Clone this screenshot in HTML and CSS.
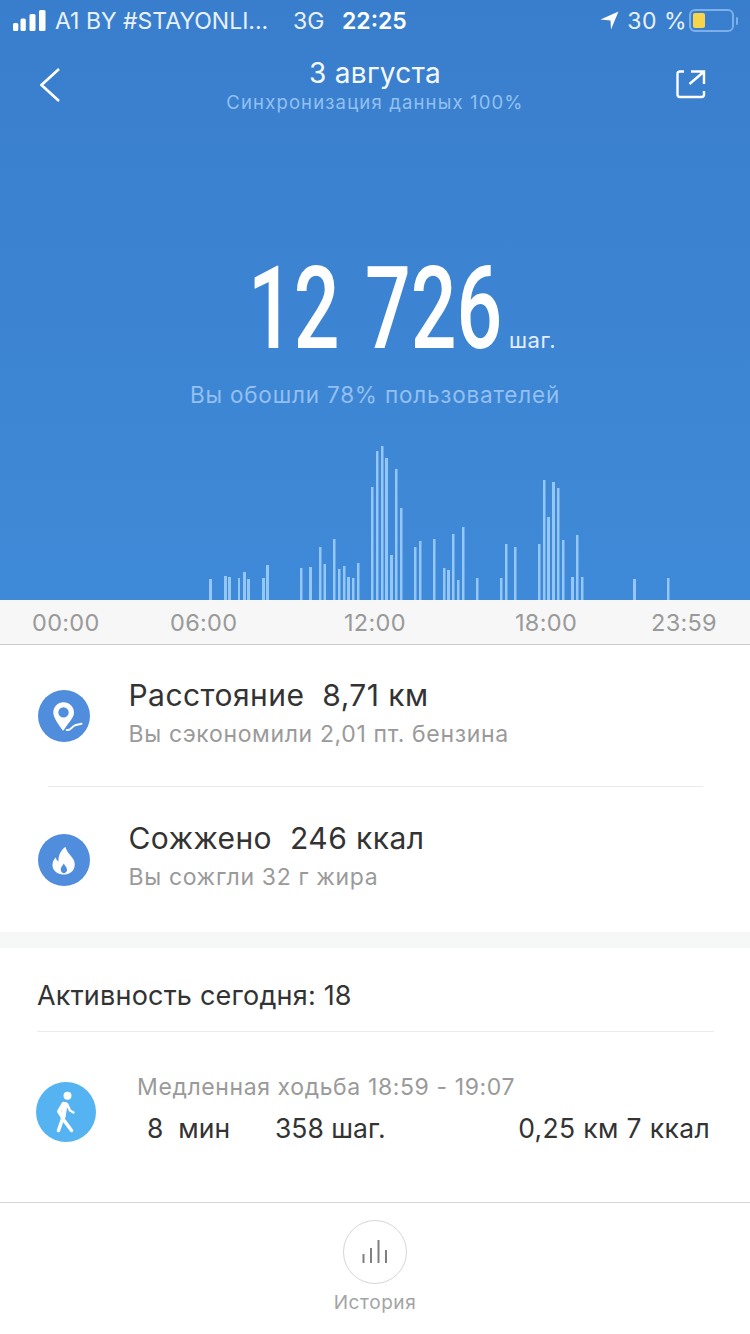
FILE: index.html
```html
<!DOCTYPE html>
<html lang="ru">
<head>
<meta charset="utf-8">
<title>Шаги</title>
<link rel="stylesheet" href="styles.css">
</head>
<body>
<div class="screen">
  <section class="hero">
    <div class="status">
      <svg class="signal" width="34" height="21" viewBox="0 0 34 21"><rect x="0" y="13" width="5.300" height="8" rx="1.5"/><rect x="7.500" y="8.500" width="5.300" height="12.500" rx="1.5"/><rect x="16.500" y="4" width="6" height="17" rx="1.5"/><rect x="26" y="0" width="6.500" height="21" rx="1.5"/></svg>
      <span class="carrier">A1 BY #STAYONLI...</span>
      <span class="net">3G</span>
      <span class="clock">22:25</span>
      <span class="status-right">
        <svg width="19" height="19" viewBox="0 0 19 19"><path class="fill-white" d="M18.500 .5 L.5 8.500 L10.500 9.500 L11 18.500 Z"/></svg>
        <span class="battery-pct">30 %</span>
        <span class="battery"><span class="battery-level"></span></span>
        <span class="battery-tip"></span>
      </span>
    </div>
    <div class="navbar">
      <svg class="back" width="22" height="36" viewBox="0 0 22 36"><path d="M19 1 L1.500 17 L19 33"/></svg>
      <div class="title">
        <div class="title-main">3 августа</div>
        <div class="title-sub">Синхронизация данных 100%</div>
      </div>
      <svg class="share" width="30" height="30" viewBox="0 0 30 30"><path d="M8 1.500 H4 Q1.500 1.500 1.500 4 V24.500 Q1.500 27 4 27 H25.500 Q28 27 28 24.500 V21 M13.500 14 L27.500 2 M15 1.500 H28 V14"/></svg>
    </div>
    <div class="steps">
      <span class="steps-num"><span class="steps-digits">12 726</span></span>
      <span class="steps-unit">шаг.</span>
    </div>
    <div class="rank">Вы обошли 78% пользователей</div>
    <svg class="chart" width="750" height="160" viewBox="0 440 750 160">
      <rect x="209" y="579" width="3" height="21"/><rect x="224" y="576" width="3" height="24"/><rect x="228" y="577" width="3" height="23"/><rect x="238" y="578" width="2" height="22"/><rect x="243" y="572" width="3" height="28"/><rect x="247" y="579" width="3" height="21"/><rect x="262" y="578" width="3" height="22"/><rect x="266" y="565" width="3" height="35"/><rect x="300" y="568" width="2.5" height="32"/><rect x="309" y="567" width="3" height="33"/><rect x="319" y="547" width="2.5" height="53"/><rect x="323.500" y="564" width="2.500" height="36"/><rect x="333" y="539" width="2.500" height="61"/><rect x="338" y="569" width="2.500" height="31"/><rect x="343" y="566" width="2.500" height="34"/><rect x="347" y="577" width="3" height="23"/><rect x="352" y="578" width="2.500" height="22"/><rect x="357" y="563" width="2.500" height="37"/><rect x="371" y="487" width="2.500" height="113"/><rect x="376" y="451" width="2.500" height="149"/><rect x="381" y="446" width="2.500" height="154"/><rect x="385" y="458" width="3" height="142"/><rect x="390" y="555" width="3" height="45"/><rect x="395" y="469" width="2.500" height="131"/><rect x="400" y="508" width="2.500" height="92"/><rect x="414" y="547" width="2.500" height="53"/><rect x="419" y="541" width="2.500" height="59"/><rect x="433" y="539" width="2.500" height="61"/><rect x="443" y="568" width="2.500" height="32"/><rect x="447" y="570" width="3" height="30"/><rect x="452" y="534" width="2.500" height="66"/><rect x="457" y="580" width="2.500" height="20"/><rect x="462" y="527" width="2.500" height="73"/><rect x="476" y="578" width="2.500" height="22"/><rect x="500" y="578" width="2.500" height="22"/><rect x="505" y="544" width="2.500" height="56"/><rect x="514" y="547" width="2.500" height="53"/><rect x="538" y="544" width="2.500" height="56"/><rect x="543" y="480" width="2.500" height="120"/><rect x="547" y="517" width="3" height="83"/><rect x="552" y="482" width="3" height="118"/><rect x="557" y="488" width="2.500" height="112"/><rect x="562" y="540" width="2.500" height="60"/><rect x="571" y="577" width="3" height="23"/><rect x="576" y="535" width="2.500" height="65"/><rect x="581" y="577" width="2.500" height="23"/><rect x="633" y="579" width="3" height="21"/><rect x="667" y="578" width="2.500" height="22"/>
    </svg>
  </section>
  <div class="axis">
    <span>00:00</span><span>06:00</span><span>12:00</span><span>18:00</span><span>23:59</span>
  </div>
  <section class="stats">
    <div class="stat">
      <span class="stat-icon">
        <svg width="52" height="52" viewBox="0 0 52 52"><path class="fill-white" fill-rule="evenodd" d="M25.500 12.300 C19.800 12.300 15.300 16.800 15.300 22.500 C15.300 27.800 20.800 35 25 40.800 C26.200 39.500 27.800 37 29.200 35 C32.800 30.500 36 26.500 36 22.500 C36 16.800 31.300 12.300 25.500 12.300 Z M25.500 17.200 A5.200 5.200 0 1 1 25.500 27.600 A5.200 5.200 0 1 1 25.500 17.200 Z"/><path class="stroke-white thin" d="M28.800 40 C32.500 41 33.500 36.800 37 35.300 L43.500 33.800"/></svg>
      </span>
      <div class="stat-text">
        <div class="stat-main"><span class="stat-label">Расстояние</span><span>8,71 км</span></div>
        <div class="stat-sub">Вы сэкономили 2,01 пт. бензина</div>
      </div>
    </div>
    <div class="stat-divider"></div>
    <div class="stat stat-second">
      <span class="stat-icon">
        <svg width="52" height="52" viewBox="0 0 52 52"><path class="fill-white" fill-rule="evenodd" d="M27.500 12.700 C28.500 18 33 21 35.500 25.500 C38.800 32 35.500 40 27 40.400 L24.500 40.400 C17.500 40 13.200 34.500 14.800 28.500 C15.300 26.500 16.500 24.800 17.800 23.500 C18.200 25.500 19 26.800 20.500 27.500 C20 21 23.500 15.500 27.500 12.700 Z M25.800 29.500 C24.300 31.800 22.500 33.500 22.800 36 C23 38 24.500 39.300 26 39.200 C27.800 39 29.300 37.500 29 35.500 C28.700 33 27 32 25.800 29.500 Z"/></svg>
      </span>
      <div class="stat-text">
        <div class="stat-main"><span class="stat-label">Сожжено</span><span>246 ккал</span></div>
        <div class="stat-sub">Вы сожгли 32 г жира</div>
      </div>
    </div>
  </section>
  <div class="band"></div>
  <section class="activity">
    <h2 class="activity-head">Активность сегодня: 18</h2>
    <div class="activity-item">
      <span class="walk-icon">
        <svg width="60" height="60" viewBox="0 0 60 60"><circle class="fill-white" cx="31.500" cy="13.700" r="4"/><path class="stroke-white walk-torso" d="M29 22.500 L27 35"/><path class="stroke-white walk-limb" d="M27.500 21.500 L22.800 29.500 L25 33 M26.300 36 L35.500 48.500 M26.500 37 L22.500 48.500"/><path class="stroke-white walk-arm" d="M31 22 L34 28.500 L37.500 30.500"/></svg>
      </span>
      <div class="activity-info">
        <div class="activity-time">Медленная ходьба 18:59 - 19:07</div>
        <div class="activity-values">
          <span class="val-min">8&nbsp; мин</span>
          <span class="val-steps">358 шаг.</span>
          <span class="val-rest">0,25 км 7 ккал</span>
        </div>
      </div>
    </div>
  </section>
  <nav class="tabbar">
    <span class="history-btn">
      <svg width="30" height="26" viewBox="0 0 30 26"><path d="M3.500 15 V24 M11 9 V24 M18.500 1 V24 M26 11 V24"/></svg>
    </span>
    <span class="history-label">История</span>
  </nav>
</div>
</body>
</html>
```
FILE: styles.css
```css
* { box-sizing: border-box; }
html, body { margin: 0; padding: 0; background: #fff; }
body { font-family: Inter, Roboto, "Liberation Sans", sans-serif; }
.screen { width: 750px; height: 1334px; overflow: hidden; display: flex; flex-direction: column; }

.fill-white { fill: #fff; }
.stroke-white { fill: none; stroke: #fff; stroke-width: 2.5; stroke-linecap: round; }
.thin { stroke-width: 2; }

/* Blue summary panel */
.hero {
  height: 600px;
  background: linear-gradient(180deg, #397ecd 0%, #3f8ad8 100%);
  color: #fff;
  display: flex;
  flex-direction: column;
}
.status { height: 41px; display: flex; align-items: center; padding: 0 0 0 13px; font-size: 23px; color: #e9f1fb; }
.signal { fill: #fff; margin-right: 8px; }
.carrier { width: 238px; white-space: nowrap; }
.net { width: 49px; }
.clock { font-weight: 600; color: #fff; }
.status-right { margin-left: auto; display: flex; align-items: center; padding-right: 12px; }
.battery-pct { margin: 0 2px 0 8px; letter-spacing: .5px; }
.battery { width: 45px; height: 23px; border: 2px solid #7db0e8; border-radius: 6px; padding: 2px; display: block; }
.battery-level { display: block; width: 12px; height: 100%; background: #f7d54a; border-radius: 2px; }
.battery-tip { width: 2px; height: 8px; margin-left: 2px; background: #7db0e8; border-radius: 1px; }

.navbar { height: 80px; display: flex; justify-content: space-between; align-items: flex-start; padding: 27px 44px 0 40px; }
.back { fill: none; stroke: #fff; stroke-width: 2.6; }
.share { fill: none; stroke: #fff; stroke-width: 2.4; margin: 1.500px 0 0; }
.title { text-align: center; margin-top: -13px; margin-left: 12px; }
.title-main { font-size: 28px; line-height: 36px; letter-spacing: .3px; color: #f4f8fd; }
.title-sub { font-size: 18.500px; line-height: 22px; letter-spacing: 1.150px; color: #93c0f0; }

.steps { height: 125px; margin-top: 125px; padding-left: 248px; display: flex; align-items: flex-end; }
.steps-num { display: inline-block; width: 252px; font-family: Roboto, sans-serif; font-weight: 500; font-size: 115px; line-height: 125px; }
.steps-digits { display: inline-block; transform: scaleX(.7); transform-origin: 0 50%; white-space: nowrap; word-spacing: 8px; }
.steps-unit { font-size: 22px; line-height: 28px; letter-spacing: .5px; margin: 0 0 17px 9px; color: #e3eefa; }
.rank { margin-top: 9px; text-align: center; font-size: 22.500px; line-height: 30px; letter-spacing: .8px; color: #93c0f0; }
.chart { display: block; margin-top: auto; fill: #94c6f6; }

/* Time axis */
.axis { height: 45px; background: #f7f7f7; border-bottom: 1px solid #cdcdcd; display: grid; grid-template-columns: 138px 174px 171px 136px auto; padding: 0 0 0 32px; align-items: center; font-size: 23.500px; letter-spacing: .3px; color: #9a9a9a; }

/* Distance and calories */
.stats { height: 287px; background: #fff; display: flex; flex-direction: column; }
.stat { height: 141px; display: flex; align-items: center; padding: 0 0 0 38px; }
.stat-second { height: 145px; }
.stat-icon { width: 52px; height: 52px; border-radius: 50%; background: #508ddd; margin-right: 38.500px; flex: none; }
.stat-icon svg { display: block; }
.stat-text { margin-top: -8px; }
.stat-second .stat-text { margin-top: -9px; }
.stat-main { font-size: 30px; line-height: 40px; letter-spacing: .45px; color: #333; display: flex; gap: 18px; }
.stat-sub { font-size: 23px; line-height: 30px; letter-spacing: .65px; color: #9a9a9a; margin-top: 4px; }
.stat-divider { height: 1px; margin: 0 47px 0 48px; background: #ebebeb; }
.band { height: 16px; background: #f6f7f7; }

/* Today's activity list */
.activity { height: 254px; background: #fff; }
.activity-head { height: 84px; margin: 0 36px 0 37px; border-bottom: 1px solid #ebebeb; font-weight: 400; font-size: 27px; line-height: 96px; letter-spacing: .2px; color: #333; }
.activity-item { display: flex; padding: 50px 40px 0 36px; }
.walk-icon { width: 60px; height: 60px; border-radius: 50%; background: #56b3f2; flex: none; }
.walk-icon svg { display: block; }
.walk-torso { stroke-width: 5; }
.walk-limb { stroke-width: 3.500; stroke-linejoin: round; }
.walk-arm { stroke-width: 2.500; stroke-linejoin: round; }
.activity-info { flex: 1; margin-left: 41px; margin-top: -9px; }
.activity-time { font-size: 23px; line-height: 28px; letter-spacing: .6px; color: #9a9a9a; }
.activity-values { display: flex; font-size: 26.500px; line-height: 36px; color: #333; margin-top: 9px; padding-left: 10px; }
.val-min { width: 128px; }
.val-rest { margin-left: auto; letter-spacing: .35px; }

/* Bottom bar */
.tabbar { flex: 1; border-top: 1px solid #d6d6d6; display: flex; flex-direction: column; align-items: center; padding-top: 17px; background: #fff; }
.history-btn { width: 64px; height: 64px; border: 1.500px solid #d6d6d6; border-radius: 50%; display: flex; align-items: center; justify-content: center; }
.history-btn svg { fill: none; stroke: #808080; stroke-width: 2; }
.history-label { font-size: 19px; line-height: 24px; letter-spacing: .6px; color: #a4a4a4; margin-top: 7px; }
```
